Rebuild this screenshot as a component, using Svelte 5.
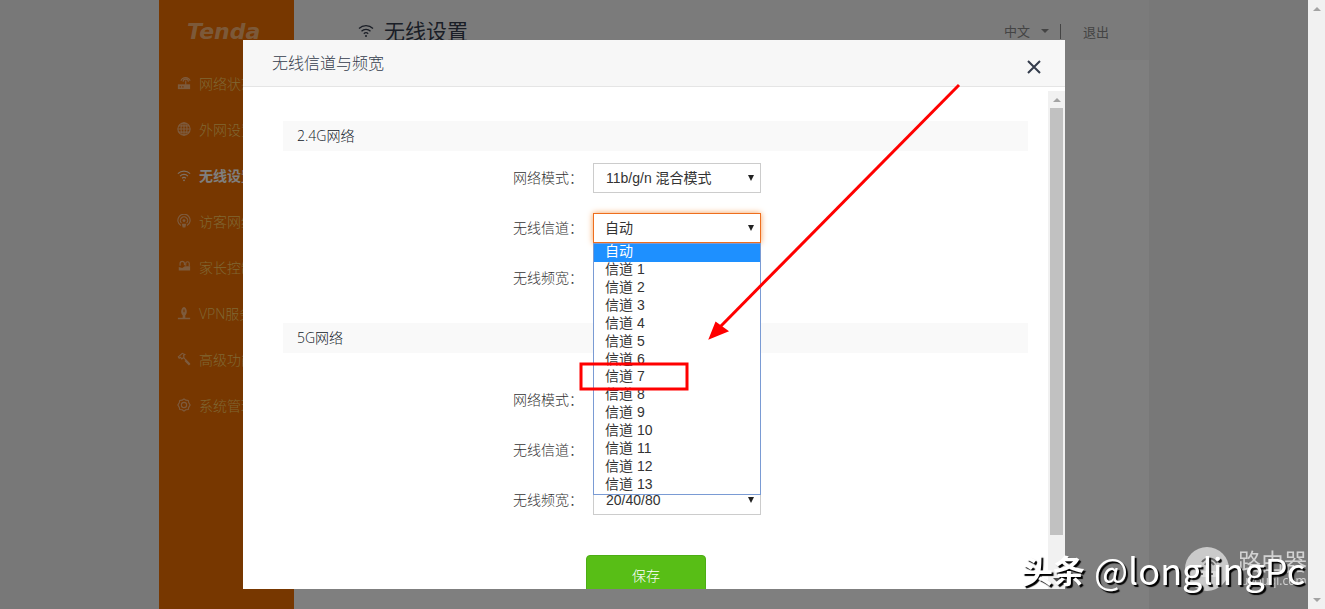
<script lang="ts">
  interface NavItem {
    id: string;
    label: string;
  }

  interface Field {
    id: string;
    label: string;
    options: string[];
  }

  interface Group {
    title: string;
    fields: Field[];
  }

  const NAV: NavItem[] = [
    { id: 'status', label: '网络状态' },
    { id: 'wan', label: '外网设置' },
    { id: 'wireless', label: '无线设置' },
    { id: 'guest', label: '访客网络' },
    { id: 'parental', label: '家长控制' },
    { id: 'vpn', label: 'VPN服务' },
    { id: 'advanced', label: '高级功能' },
    { id: 'system', label: '系统管理' },
  ];

  const CHANNELS = ['自动', ...Array.from({ length: 13 }, (_, i) => `信道 ${i + 1}`)];

  const GROUPS: Group[] = [
    {
      title: '2.4G网络',
      fields: [
        { id: 'mode24', label: '网络模式', options: ['11b/g/n 混合模式'] },
        { id: 'channel24', label: '无线信道', options: CHANNELS },
        { id: 'width24', label: '无线频宽', options: ['20/40'] },
      ],
    },
    {
      title: '5G网络',
      fields: [
        { id: 'mode5', label: '网络模式', options: ['11a/n/ac 混合模式'] },
        { id: 'channel5', label: '无线信道', options: ['自动'] },
        { id: 'width5', label: '无线频宽', options: ['20/40/80'] },
      ],
    },
  ];

  let active = $state('wireless');
  let openField = $state('channel24');
  let channel = $state('自动');

  function pick(option: string) {
    channel = option;
    openField = '';
  }
</script>

{#snippet wifi()}
  <path d="M1 6.5a10 10 0 0 1 14 0M3.5 9.2a6.4 6.4 0 0 1 9 0M5.8 11.7a3.2 3.2 0 0 1 4.4 0" />
  <circle cx="8" cy="14" r="1" class="solid" />
{/snippet}

<div class="page">
  <div class="container">
    <aside class="sidebar">
      <a class="logo" href="#home">Tenda</a>
      <nav>
        {#each NAV as item (item.id)}
          <a
            href="#{item.id}"
            class="nav-item"
            class:active={active === item.id}
            onclick={() => (active = item.id)}
          >
            <svg class="icon" viewBox="0 0 16 16" width="14" height="14" aria-hidden="true">
              {#if item.id === 'status'}
                <path d="M1 9.500h14v5.500H1z" class="solid" />
                <path d="M10 10V5M4.5 5.5a5.6 5.6 0 0 1 10.5 0M7 6.5a3 3 0 0 1 6 0" />
                <path d="M3 12.5h1.5M6 12.5h1.5" class="cut" />
              {:else if item.id === 'wan'}
                <circle cx="8" cy="8" r="7" />
                <ellipse cx="8" cy="8" rx="3.4" ry="7" />
                <path d="M1 8h14M8 1v14M2.2 4.5h11.6M2.2 11.5h11.6" />
              {:else if item.id === 'wireless'}
                {@render wifi()}
              {:else if item.id === 'guest'}
                <path d="M4.5 13.2a7 7 0 1 1 7 0M5 10.5a4.2 4.2 0 1 1 6 0" />
                <circle cx="8" cy="7.5" r="1.6" class="solid" />
                <path d="M5.500 11h5l-1 4.500h-3z" class="solid" />
              {:else if item.id === 'parental'}
                <path d="M3.500 6.500V4a2.500 2.500 0 0 1 5 0v2M10 6.500V4a2 2 0 0 1 4 0v3" />
                <path d="M2 8l4 1 3-2h6v5H2z" class="solid" />
              {:else if item.id === 'vpn'}
                <path d="M8 1c4 1 4 8 1.500 9.500v3H15V15H1v-1.500h5.500v-3C4 9 4 2 8 1z" class="solid" />
                <path d="M8 4v3" class="cut" />
              {:else if item.id === 'advanced'}
                <path d="M1.500 5.500L6 1.500l3 1.500-1.500 1L8 6 5.500 8 4 6 2.500 7zM7.500 6.500l7 7" />
                <path d="M9.500 9.500l5 5" class="thick" />
              {:else}
                <path d="M8 1l2 1.500 2.800.3.700 2.600L15 8l-1.500 2.500-.7 2.600-2.800.3L8 15l-2-1.600-2.800-.3-.7-2.600L1 8l1.500-2.600.7-2.600L6 2.500z" />
                <circle cx="8" cy="8" r="3" />
              {/if}
            </svg>
            <span>{item.label}</span>
          </a>
        {/each}
      </nav>
    </aside>

    <main class="main">
      <header class="topbar">
        <h1>
          <svg class="icon" viewBox="0 0 16 16" width="16" height="16" aria-hidden="true">
            {@render wifi()}
          </svg>
          无线设置
        </h1>
        <div class="account">
          <button type="button" class="lang">中文 <span class="caret"></span></button>
          <a href="#logout">退出</a>
        </div>
      </header>
    </main>
  </div>

  <div class="page-scroll" aria-hidden="true">
    <span class="arrow up"></span>
    <span class="arrow down"></span>
  </div>
</div>

<div class="backdrop">
  <div class="dialog" role="dialog" aria-labelledby="dialog-title">
    <header class="dialog-head">
      <h2 id="dialog-title">无线信道与频宽</h2>
      <button type="button" class="close" aria-label="关闭">
        <svg viewBox="0 0 16 16" width="16" height="16">
          <path d="M2 2l12 12M14 2L2 14" />
        </svg>
      </button>
    </header>

    <div class="dialog-body">
      <form onsubmit={(e) => e.preventDefault()}>
        {#each GROUPS as group (group.title)}
          <section>
            <h3>{group.title}<span class="colon">:</span></h3>
            <div class="fields">
              {#each group.fields as field (field.id)}
                <div class="field">
                  <label for={field.id}>{field.label}：</label>
                  <div class="control" class:open={openField === field.id}>
                    {#if field.id === 'channel24'}
                      <select id={field.id} bind:value={channel}>
                        {#each field.options as option}
                          <option>{option}</option>
                        {/each}
                      </select>
                    {:else}
                      <select id={field.id}>
                        {#each field.options as option}
                          <option>{option}</option>
                        {/each}
                      </select>
                    {/if}
                    {#if openField === field.id}
                      <div class="list" role="listbox" aria-label={field.label}>
                        {#each field.options as option}
                          <button
                            type="button"
                            role="option"
                            aria-selected={option === channel}
                            onclick={() => pick(option)}>{option}</button
                          >
                        {/each}
                      </div>
                    {/if}
                  </div>
                </div>
              {/each}
            </div>
          </section>
        {/each}
        <button type="submit" class="save">保存</button>
      </form>
      <div class="scrollbar" aria-hidden="true">
        <span class="arrow up"></span>
        <span class="thumb"></span>
        <span class="arrow down dark"></span>
      </div>
    </div>

    <svg class="marks" viewBox="0 0 822 549" width="822" height="549" aria-hidden="true">
      <path d="M716 45L476 288" class="shaft" />
      <path d="M467 298l6-15 11 8z" class="head" />
      <rect x="338" y="324" width="106" height="25" class="box" />
    </svg>
  </div>
</div>

<div class="badge">
  <svg viewBox="0 0 44 44" width="44" height="44" aria-hidden="true">
    <circle cx="22" cy="22" r="22" class="disc" />
    <path d="M17 15a9 9 0 0 1 15 1M20 18a5 5 0 0 1 9 0M24 19v6" />
    <rect x="12" y="24" width="20" height="6" rx="2" class="router" />
    <path d="M16 27h2M21 27h2M26 27h2" />
  </svg>
  <div class="badge-text">
    <span class="name">路由器</span>
    <span class="site">luyouqi.com</span>
  </div>
</div>

<div class="watermark">
  <b>头条</b><span>@longlingPc</span>
</div>

<style>
  :global(body) {
    overflow: hidden;
    background: #f0f0f0;
    font-family: 'Open Sans', 'Noto Sans CJK SC', sans-serif;
    font-size: 14px;
  }

  h1,
  h2,
  h3 {
    margin: 0;
    font-weight: 400;
  }

  button,
  select {
    font: inherit;
    border: 0;
    padding: 0;
    background: none;
    cursor: pointer;
  }

  a {
    color: inherit;
    text-decoration: none;
  }

  .page {
    display: flex;
    min-height: 100vh;
  }

  .container {
    display: flex;
    flex: 0 1 990px;
    margin: 0 auto;
    background: #fff;
  }

  .sidebar {
    flex: 0 0 135px;
    background: #ee6e00;
  }

  .logo {
    display: block;
    padding: 20px 0 16px 28px;
    line-height: 24px;
    font-family: 'DejaVu Sans', sans-serif;
    font-size: 22px;
    font-weight: 700;
    font-style: italic;
    color: #ffd8b0aa;
  }

  .nav-item {
    display: flex;
    align-items: center;
    gap: 8px;
    height: 46px;
    padding-left: 18px;
    font-weight: 300;
    color: #ffcc66;
    white-space: nowrap;
  }

  .nav-item .icon {
    color: #ffc89a;
    opacity: 0.8;
  }

  .nav-item.active {
    font-weight: 700;
    color: #fff;
  }

  .nav-item.active .icon {
    color: #fff;
  }

  .icon {
    flex-shrink: 0;
    fill: none;
    stroke: currentColor;
    stroke-width: 1.3;
  }

  .icon .solid {
    fill: currentColor;
    stroke: none;
  }

  .icon .cut {
    stroke: #ee6e00;
  }

  .icon .thick {
    stroke-width: 2.6;
  }

  .main {
    flex: 1;
  }

  .topbar {
    display: flex;
    align-items: center;
    justify-content: space-between;
    height: 60px;
    padding: 0 40px 0 64px;
    background: #f7f7f7;
  }

  h1 {
    display: flex;
    align-items: center;
    gap: 10px;
    font-size: 21px;
    color: #343c4c;
  }

  .account {
    display: flex;
    align-items: center;
    gap: 22px;
    padding-top: 2px;
    font-size: 13px;
    color: #888;
  }

  .lang {
    display: flex;
    align-items: center;
    gap: 11px;
    padding-right: 11px;
    border-right: 1px solid #888;
    line-height: 15px;
    color: inherit;
  }

  .caret {
    border: 4px solid transparent;
    border-top-color: #888;
    border-bottom: 0;
  }

  .page-scroll {
    position: relative;
    z-index: 2;
    display: flex;
    flex-direction: column;
    justify-content: space-between;
    align-items: center;
    flex: 0 0 17px;
    padding: 7px 0;
    box-sizing: border-box;
    background: #f1f1f1;
  }

  .arrow {
    border: 4px solid transparent;
  }

  .arrow.up {
    border-top: 0;
    border-bottom-color: #a3a3a3;
  }

  .arrow.down {
    border-bottom: 0;
    border-top-color: #a3a3a3;
  }

  .arrow.dark {
    border-top-color: #505050;
  }

  .backdrop {
    position: fixed;
    inset: 0 17px 0 0;
    z-index: 1;
    display: flex;
    justify-content: center;
    padding: 40px 0 20px;
    background: rgba(0, 0, 0, 0.5);
  }

  .dialog {
    position: relative;
    display: flex;
    flex-direction: column;
    flex: 0 1 822px;
    background: #fff;
  }

  .dialog-head {
    display: flex;
    align-items: center;
    justify-content: space-between;
    height: 46px;
    padding: 0 23px 0 29px;
    background: #f7f7f7;
    border-bottom: 1px solid #e5e5e5;
    color: #343c4c;
  }

  h2 {
    padding-bottom: 2px;
    font-size: 16px;
    font-weight: 300;
  }

  .close {
    display: flex;
    padding-top: 8px;
  }

  .close path {
    fill: none;
    stroke: #343c4c;
    stroke-width: 2;
  }

  .dialog-body {
    display: flex;
    flex: 1;
    min-height: 0;
    margin-top: 4px;
    overflow: hidden;
  }

  form {
    flex: 1;
    padding: 30px 20px 30px 40px;
  }

  h3 {
    padding: 0 14px;
    font-size: 14px;
    font-weight: 300;
    line-height: 30px;
    color: #111828;
    background: #f9f9f9;
  }

  .colon {
    color: #fff;
  }

  .fields {
    display: grid;
    gap: 20px;
    padding: 12px 0 30px;
  }

  section + section .fields {
    padding: 32px 0 40px;
  }

  .field {
    display: grid;
    grid-template-columns: 300px 168px;
    gap: 10px;
    align-items: center;
  }

  label {
    padding-bottom: 2px;
    text-align: right;
    font-weight: 300;
    color: #333;
  }

  .control {
    position: relative;
    font-family: 'Liberation Sans', 'Noto Sans CJK SC', sans-serif;
    color: #333;
  }

  .control::after {
    content: '';
    position: absolute;
    top: 12px;
    right: 7px;
    border: 3px solid transparent;
    border-top: 6px solid #222;
    border-bottom: 0;
    pointer-events: none;
  }

  select {
    display: block;
    width: 100%;
    height: 30px;
    padding: 0 12px;
    border: 1px solid #ccc;
    border-radius: 0;
    appearance: none;
    background: #fff;
    color: inherit;
  }

  .open select {
    padding: 0 11px;
    border-color: #ee6e1e;
    box-shadow: 0 0 6px #f5a05a;
  }

  .list {
    position: absolute;
    top: 30px;
    left: 0;
    right: 0;
    z-index: 1;
    display: grid;
    grid-auto-rows: 1fr;
    height: 252px;
    box-sizing: border-box;
    border: 1px solid #7a9bd4;
    background: #fff;
  }

  .list button {
    min-height: 0;
    padding: 0 11px 2px;
    line-height: 15px;
    text-align: left;
    color: inherit;
  }

  .list button[aria-selected='true'] {
    background: #1e90ff;
    color: #fff;
  }

  .save {
    display: block;
    width: 120px;
    height: 40px;
    margin: 0 0 0 303px;
    border: 1px solid #4cae14;
    border-radius: 4px;
    background: #58be16;
    font-weight: 300;
    color: #fff;
  }

  .scrollbar {
    display: flex;
    flex-direction: column;
    align-items: center;
    flex: 0 0 17px;
    padding: 7px 0;
    box-sizing: border-box;
    background: #f1f1f1;
  }

  .thumb {
    width: 13px;
    flex: 0 1 427px;
    margin: 6px 0 auto;
    background: #c1c1c1;
  }

  .marks {
    position: absolute;
    top: 0;
    left: 0;
    z-index: 2;
    pointer-events: none;
  }

  .shaft,
  .box {
    fill: none;
    stroke: #f00;
    stroke-width: 3;
  }

  .head {
    fill: #f00;
    stroke: #f00;
    stroke-width: 2;
  }

  .watermark {
    position: fixed;
    right: 20px;
    bottom: 16px;
    z-index: 4;
    display: flex;
    align-items: center;
    gap: 9px;
    font-family: 'Noto Sans CJK SC', sans-serif;
    font-size: 36px;
    line-height: 48px;
    color: #fff;
    text-shadow: 2px 2px 1px #000;
  }

  .watermark b {
    font-size: 32px;
  }

  .badge {
    position: fixed;
    right: 18px;
    bottom: 18px;
    z-index: 3;
    display: flex;
    align-items: center;
    gap: 9px;
    color: #ffffffaa;
  }

  .badge path {
    fill: none;
    stroke: #666;
    stroke-width: 2;
  }

  .disc {
    fill: #e6e6e6;
    opacity: 0.75;
  }

  .router {
    fill: #ddd;
  }

  .badge-text {
    display: flex;
    flex-direction: column;
  }

  .name {
    font-size: 23px;
    line-height: 24px;
  }

  .site {
    font-size: 12px;
    line-height: 16px;
  }
</style>
